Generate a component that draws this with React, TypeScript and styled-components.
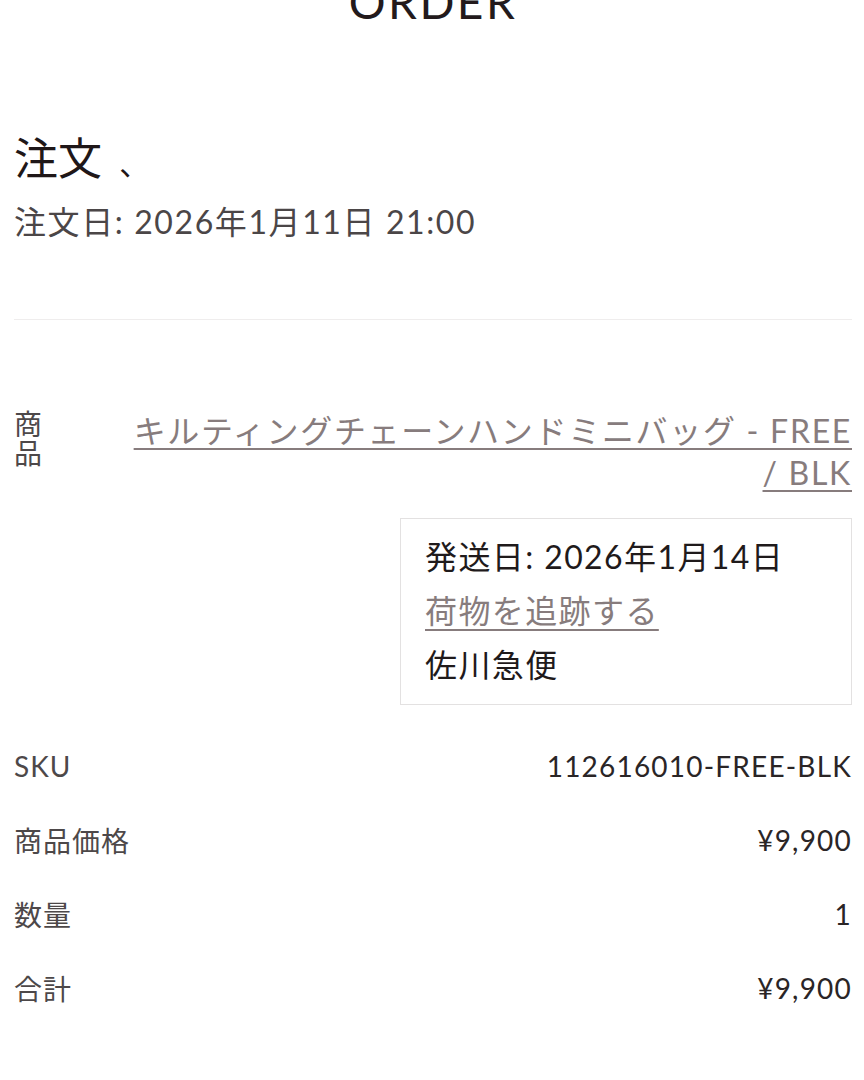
import React from 'react';
import styled, { createGlobalStyle } from 'styled-components';

const GlobalStyle = createGlobalStyle`
  html, body {
    margin: 0;
    padding: 0;
    background: #ffffff;
  }
  body {
    font-family: 'Lato', 'Noto Sans CJK JP', sans-serif;
    color: #231a1c;
    overflow: hidden;
  }
`;

const Page = styled.main`
  display: flex;
  flex-direction: column;
  padding: 0 12px 0 14px;
`;

const Title = styled.h1`
  margin: -21px 0 0;
  font-size: 46px;
  line-height: 46px;
  font-weight: 400;
  letter-spacing: 2.5px;
  text-align: center;
  color: #231a1c;
`;

const OrderHeader = styled.header`
  display: flex;
  flex-direction: column;
  gap: 7px;
  margin-top: 105px;
`;

const Heading = styled.h2`
  margin: 0;
  font-size: 44px;
  line-height: 56px;
  font-weight: 400;
  color: #1f1718;
`;

const Mark = styled.span`
  font-size: 30px;
  margin-left: 6px;
`;

const OrderDate = styled.p`
  margin: 0;
  font-size: 32px;
  line-height: 48px;
  letter-spacing: 1.6px;
  color: #4b4647;
`;

const Divider = styled.hr`
  margin: 73px 0 0;
  border: 0;
  border-top: 1px solid #efeded;
`;

const ItemTable = styled.section`
  display: flex;
  flex-direction: column;
  margin-top: 90px;
`;

const ProductRow = styled.div`
  display: grid;
  grid-template-columns: 30px 1fr;
  column-gap: 76px;
  align-items: start;
  margin-bottom: 24px;
`;

const VerticalLabel = styled.span`
  font-size: 28px;
  line-height: 29px;
  color: #4d4849;
  word-break: break-all;
`;

const ProductCell = styled.div`
  display: flex;
  flex-direction: column;
  align-items: flex-end;
  gap: 24px;
`;

const ProductLink = styled.a`
  font-size: 32px;
  line-height: 42px;
  letter-spacing: 1.7px;
  color: #877c7d;
  text-align: right;
  text-decoration: underline;
  text-decoration-thickness: 2px;
  text-underline-offset: 5px;
`;

const Fulfillment = styled.div`
  box-sizing: border-box;
  width: 452px;
  padding: 11px 24px 12px;
  border: 1px solid #e3e1e1;
  display: flex;
  flex-direction: column;
  align-items: flex-start;
`;

const FulfillmentLine = styled.span<{ $muted?: boolean }>`
  font-size: 32px;
  line-height: 54px;
  letter-spacing: 1.4px;
  color: ${p => (p.$muted ? '#877c7d' : '#1f1a1b')};
  text-decoration: ${p => (p.$muted ? 'underline' : 'none')};
  text-decoration-thickness: 2px;
  text-underline-offset: 6px;
`;

const DetailRow = styled.div`
  display: flex;
  justify-content: space-between;
  align-items: center;
  height: 74px;
`;

const Label = styled.span`
  font-size: 28px;
  letter-spacing: 1px;
  color: #4d4849;
`;

const Value = styled.span`
  font-size: 28px;
  letter-spacing: 1.2px;
  color: #2a2526;
`;

const details = [
  { label: 'SKU', value: '112616010-FREE-BLK' },
  { label: '商品価格', value: '¥9,900' },
  { label: '数量', value: '1' },
  { label: '合計', value: '¥9,900' },
];

function App() {
  return (
    <>
      <GlobalStyle />
      <Page>
        <Title>ORDER</Title>
        <OrderHeader>
          <Heading>
            注文 <Mark>、</Mark>
          </Heading>
          <OrderDate>注文日: 2026年1月11日 21:00</OrderDate>
        </OrderHeader>
        <Divider />
        <ItemTable>
          <ProductRow>
            <VerticalLabel>商品</VerticalLabel>
            <ProductCell>
              <ProductLink href="#">
                キルティングチェーンハンドミニバッグ - FREE / BLK
              </ProductLink>
              <Fulfillment>
                <FulfillmentLine>発送日: 2026年1月14日</FulfillmentLine>
                <FulfillmentLine $muted>荷物を追跡する</FulfillmentLine>
                <FulfillmentLine>佐川急便</FulfillmentLine>
              </Fulfillment>
            </ProductCell>
          </ProductRow>
          {details.map(d => (
            <DetailRow key={d.label}>
              <Label>{d.label}</Label>
              <Value>{d.value}</Value>
            </DetailRow>
          ))}
        </ItemTable>
      </Page>
    </>
  );
}

export default App;
